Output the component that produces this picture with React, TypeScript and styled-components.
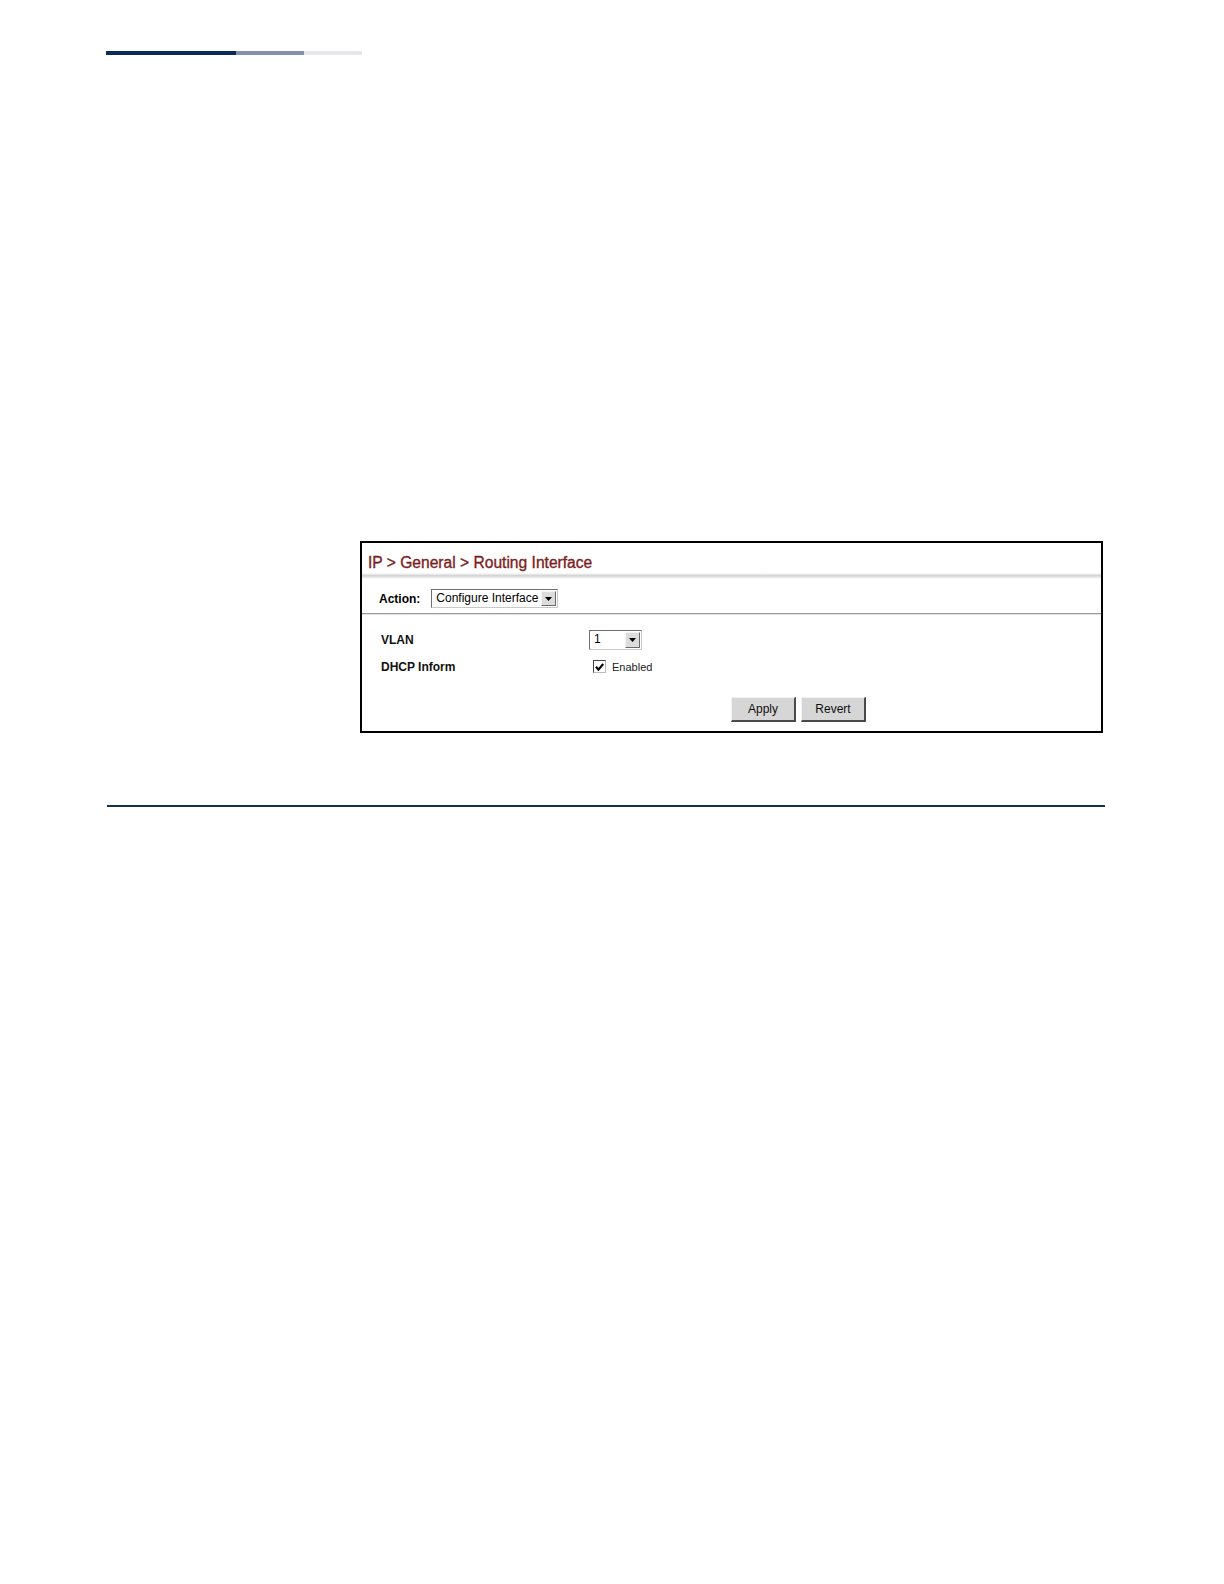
import styled, { createGlobalStyle } from "styled-components";

const GlobalStyle = createGlobalStyle`
  html, body {
    margin: 0;
    padding: 0;
    background: #ffffff;
  }
  body {
    font-family: "Liberation Sans", Arial, sans-serif;
    color: #000;
  }
`;

const Page = styled.div`
  width: 1224px;
  min-height: 1584px;
  padding: 51px 0 0 106px;
  box-sizing: border-box;
`;

const HeaderBar = styled.div`
  display: flex;
  height: 4px;
`;

const BarSegment = styled.div<{ $w: number; $color: string }>`
  width: ${(p) => p.$w}px;
  background: ${(p) => p.$color};
`;

const Figure = styled.div`
  margin: 486px 0 0 254px;
`;

const Panel = styled.div`
  width: 743px;
  box-sizing: border-box;
  border: 2px solid #000;
  background: #fff;
`;

const Title = styled.div`
  padding: 10px 0 0 6px;
  height: 20px;
  line-height: 20px;
  font-size: 15.6px;
  color: #7b1e22;
  -webkit-text-stroke: 0.35px #7b1e22;
`;

const TitleShadow = styled.div`
  height: 6px;
  background: linear-gradient(
    to bottom,
    #ffffff 0%,
    #d2d2d2 45%,
    #e2e2e2 65%,
    #ffffff 100%
  );
`;

const ActionRow = styled.div`
  display: flex;
  align-items: center;
  gap: 11px;
  height: 29px;
  padding: 5px 0 0 17px;
  border-bottom: 1px solid #9a9a9a;
  box-shadow: 0 1px 0 #e2e2e2;
`;

const ActionLabel = styled.span`
  font-size: 12px;
  font-weight: bold;
`;

const SelectBox = styled.div<{ $w: number; $h: number }>`
  display: flex;
  align-items: stretch;
  width: ${(p) => p.$w}px;
  height: ${(p) => p.$h}px;
  box-sizing: border-box;
  border: 1px solid #6f6f6f;
  border-right-color: #c8c8c8;
  border-bottom-color: #c8c8c8;
  background: #fff;
`;

const SelectValue = styled.span`
  flex: 1;
  font-size: 12px;
  line-height: 17px;
  padding-left: 4px;
  white-space: nowrap;
  overflow: hidden;
`;

const ArrowButton = styled.span`
  width: 15px;
  margin: 1px;
  box-sizing: border-box;
  display: flex;
  align-items: center;
  justify-content: center;
  background: #dcdcdc;
  border: 1px solid #f4f4f4;
  border-right-color: #6a6a6a;
  border-bottom-color: #6a6a6a;
`;

const Form = styled.div`
  padding: 12px 0 9px 19px;
`;

const FieldRow = styled.div`
  display: flex;
  align-items: center;
  height: 27px;
`;

const FieldLabel = styled.span`
  width: 208px;
  font-size: 12px;
  font-weight: bold;
  color: #111;
`;

const CheckWrap = styled.label`
  display: flex;
  align-items: center;
  gap: 6px;
  padding-left: 4px;
  font-size: 11px;
  color: #222;
`;

const CheckBox = styled.span`
  width: 13px;
  height: 13px;
  box-sizing: border-box;
  border: 1px solid #444;
  border-right-color: #bbb;
  border-bottom-color: #bbb;
  background: #fff;
  display: flex;
  align-items: center;
  justify-content: center;
`;

const ButtonRow = styled.div`
  display: flex;
  gap: 5px;
  margin: 17px 0 0 350px;
`;

const Button = styled.button`
  width: 65px;
  height: 25px;
  font-family: "Liberation Sans", Arial, sans-serif;
  font-size: 12px;
  color: #111;
  background: #d6d6d6;
  border: 1px solid #f2f2f2;
  border-right: 2px solid #4a4a4a;
  border-bottom: 2px solid #4a4a4a;
  padding: 0;
`;

const Rule = styled.div`
  width: 998px;
  height: 2px;
  margin: 72px 0 0 1px;
  background: #0e3350;
`;

const Arrow = () => (
  <svg width="7" height="4" viewBox="0 0 7 4">
    <path d="M0 0 H7 L3.5 4 Z" fill="#000" />
  </svg>
);

const Check = () => (
  <svg width="9" height="8" viewBox="0 0 9 8">
    <path d="M1 3.8 L3.4 6.6 L8.2 1" fill="none" stroke="#000" strokeWidth="2.2" />
  </svg>
);

const Select = ({ value, w, h }: { value: string; w: number; h: number }) => (
  <SelectBox $w={w} $h={h}>
    <SelectValue>{value}</SelectValue>
    <ArrowButton>
      <Arrow />
    </ArrowButton>
  </SelectBox>
);

export default function App() {
  return (
    <>
      <GlobalStyle />
      <Page>
        <HeaderBar>
          <BarSegment $w={130} $color="#0c2a5e" />
          <BarSegment $w={68} $color="#8491ab" />
          <BarSegment $w={58} $color="#e5e7ec" />
        </HeaderBar>

        <Figure>
          <Panel>
            <Title>IP &gt; General &gt; Routing Interface</Title>
            <TitleShadow />
            <ActionRow>
              <ActionLabel>Action:</ActionLabel>
              <Select value="Configure Interface" w={127} h={19} />
            </ActionRow>
            <Form>
              <FieldRow>
                <FieldLabel>VLAN</FieldLabel>
                <Select value="1" w={53} h={20} />
              </FieldRow>
              <FieldRow>
                <FieldLabel>DHCP Inform</FieldLabel>
                <CheckWrap>
                  <CheckBox>
                    <Check />
                  </CheckBox>
                  Enabled
                </CheckWrap>
              </FieldRow>
              <ButtonRow>
                <Button>Apply</Button>
                <Button>Revert</Button>
              </ButtonRow>
            </Form>
          </Panel>
        </Figure>

        <Rule />
      </Page>
    </>
  );
}
